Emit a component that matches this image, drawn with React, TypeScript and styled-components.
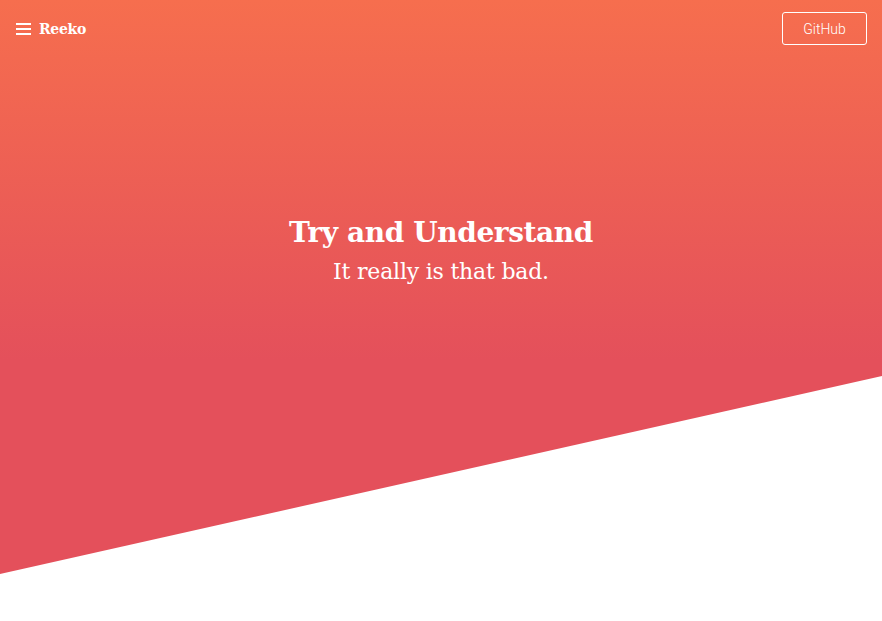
import React from "react";
import styled, { createGlobalStyle } from "styled-components";

const Global = createGlobalStyle`
  html, body { margin: 0; padding: 0; background: #ffffff; }
  body { font-family: Roboto, "Liberation Sans", sans-serif; }
  * { box-sizing: border-box; }
`;

const Hero = styled.header`
  height: 574px;
  background: linear-gradient(to bottom, #f66e4e 0px, #e4505b 360px, #e4505b 100%);
  clip-path: polygon(0 0, 100% 0, 100% 376px, 0 100%);
  display: flex;
  flex-direction: column;
  color: #ffffff;
`;

const Nav = styled.nav`
  display: flex;
  align-items: center;
  justify-content: space-between;
  padding: 12px 15px 0 16px;
`;

const Brand = styled.a`
  display: flex;
  align-items: center;
  gap: 8px;
  color: #ffffff;
  text-decoration: none;
  font-family: "DejaVu Serif", serif;
  font-weight: 700;
  font-size: 14px;
  letter-spacing: -0.3px;
`;

const Burger = styled.svg`
  width: 15px;
  height: 12px;
  display: block;
`;

const GitHubButton = styled.a`
  display: flex;
  align-items: center;
  justify-content: center;
  width: 85px;
  height: 33px;
  border: 1px solid #ffffff;
  border-radius: 3px;
  color: #ffffff;
  text-decoration: none;
  font-family: Roboto, "Liberation Sans", sans-serif;
  font-weight: 300;
  font-size: 14px;
`;

const Center = styled.div`
  display: flex;
  flex-direction: column;
  align-items: center;
  margin-top: 169px;
  text-align: center;
`;

const Title = styled.h1`
  margin: 0;
  font-family: "DejaVu Serif", serif;
  font-weight: 700;
  font-size: 28px;
  line-height: 38px;
  letter-spacing: -0.4px;
`;

const Subtitle = styled.p`
  margin: 4px 0 0;
  font-family: "DejaVu Serif", serif;
  font-weight: 300;
  font-size: 22px;
  line-height: 32px;
  letter-spacing: -0.2px;
`;

export default function App() {
  return (
    <>
      <Global />
      <Hero>
        <Nav>
          <Brand href="#">
            <Burger viewBox="0 0 15 12" aria-hidden="true">
              <rect x="0" y="0" width="15" height="2" fill="#fff" />
              <rect x="0" y="5" width="15" height="2" fill="#fff" />
              <rect x="0" y="10" width="15" height="2" fill="#fff" />
            </Burger>
            Reeko
          </Brand>
          <GitHubButton href="#">GitHub</GitHubButton>
        </Nav>
        <Center>
          <Title>Try and Understand</Title>
          <Subtitle>It really is that bad.</Subtitle>
        </Center>
      </Hero>
    </>
  );
}
